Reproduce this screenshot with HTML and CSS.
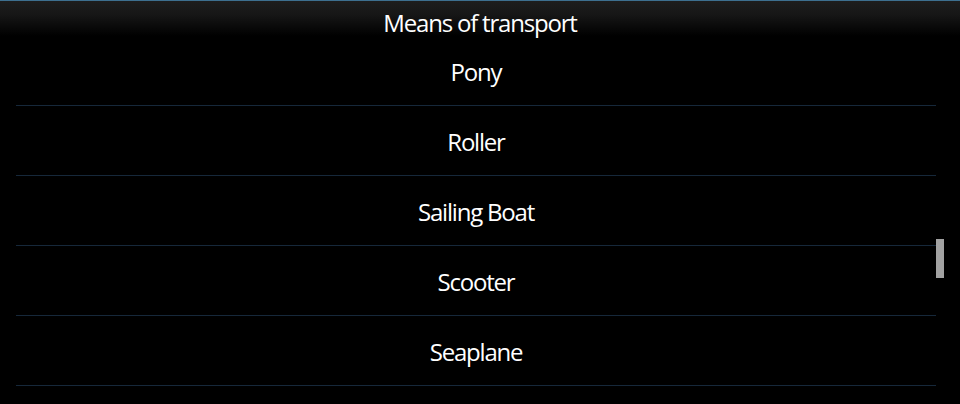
FILE: index.html
```html
<!DOCTYPE html>
<html>
<head><link rel="stylesheet" href="styles.css"></head>
<body>
<div class="screen">
  <header class="titlebar">Means of transport</header>
  <ul class="list">
    <li class="item">Pony</li>
    <li class="item">Roller</li>
    <li class="item">Sailing Boat</li>
    <li class="item">Scooter</li>
    <li class="item">Seaplane</li>
    <li class="item"></li>
  </ul>
  <div class="scrollbar"></div>
</div>
</body>
</html>
```
FILE: styles.css
```css
html,body{margin:0;padding:0;background:#000;}
body{width:960px;height:404px;overflow:hidden;}
.screen{position:relative;height:404px;overflow:hidden;background:#000;color:#fff;
  font-family:"Open Sans","Noto Sans",sans-serif;font-size:24px;letter-spacing:-1.2px;}
.titlebar{height:36px;box-sizing:border-box;border-top:1px solid #3d6f8f;
  background:linear-gradient(#1d1d1d,#161616 40%,#000 100%);
  text-align:center;line-height:44px;}
.list{list-style:none;margin:0;padding:0 24px 0 16px;}
.item{height:69px;border-bottom:1px solid #16283a;display:flex;align-items:center;justify-content:center;padding-top:2px;box-sizing:border-box;height:70px;}
.scrollbar{position:absolute;left:936px;top:239px;width:8px;height:39px;background:#a2a2a2;}
```
